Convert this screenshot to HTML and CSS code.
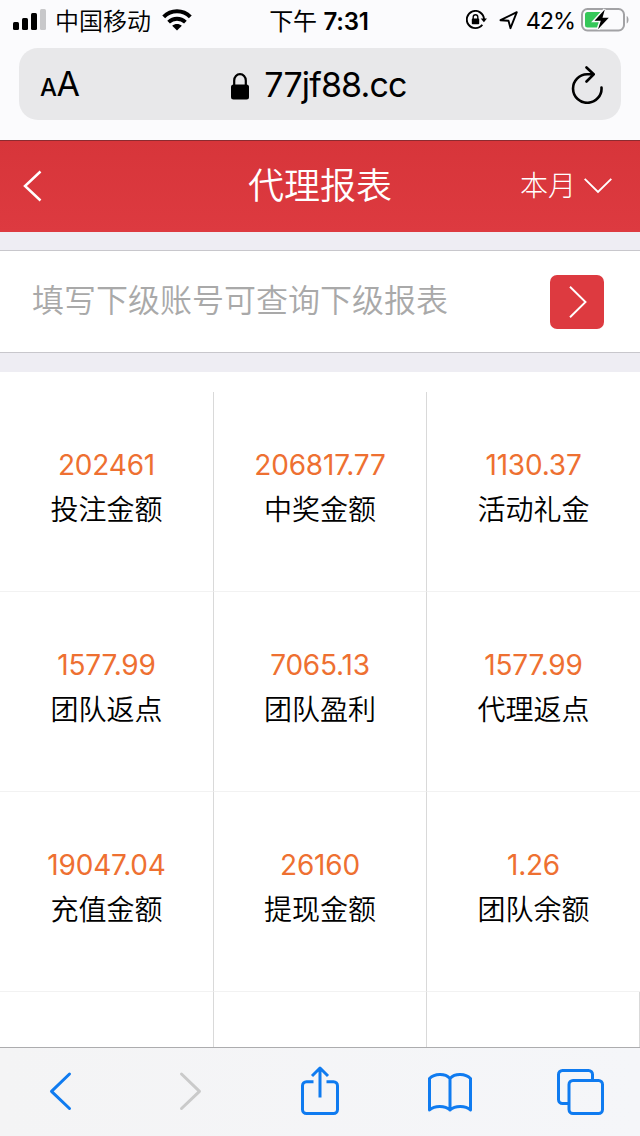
FILE: index.html
```html
<!DOCTYPE html>
<html lang="zh-CN">
<head>
    <meta charset="UTF-8">
    <meta name="viewport" content="width=device-width, initial-scale=1.0">
    <title>代理报表</title>
    <link rel="stylesheet" href="styles.css">
</head>
<body>
    <div class="browser-top">
        <div class="status-bar">
            <div class="status-left">
                <svg class="signal" width="33" height="22" viewBox="0 0 33 22">
                    <rect x="0" y="13" width="6" height="8" rx="1.5"/>
                    <rect x="9" y="9" width="6" height="12" rx="1.5"/>
                    <rect x="18" y="4" width="6" height="17" rx="1.5"/>
                    <rect x="27" y="0" width="6" height="21" rx="1.5" fill="#c8c8ca"/>
                </svg>
                <span class="carrier">中国移动</span>
                <svg class="wifi" width="30" height="22" viewBox="0 0 30 22">
                    <path d="M1.7 7.8C9 .3 21 .3 28.3 7.8" fill="none" stroke="#000" stroke-width="4"/>
                    <path d="M6.6 13.2c4.7-4.6 12.1-4.6 16.8 0" fill="none" stroke="#000" stroke-width="3.8"/>
                    <path d="M10.2 16.7c2.7-2.4 6.9-2.4 9.6 0L15 21.5z"/>
                </svg>
            </div>
            <div class="status-time"><span>下午</span> <b>7:31</b></div>
            <div class="status-right">
                <svg width="21" height="20" viewBox="0 0 21 20">
                    <path d="M16.3 14.7A8.6 8.6 0 1 1 18 9" fill="none" stroke="#000" stroke-width="1.9"/>
                    <path d="M14.7 8.4H21L17.9 12.3z"/>
                    <rect x="5.8" y="8.6" width="7.4" height="5.6" rx=".8"/>
                    <path d="M7.2 9V7a2.3 2.3 0 0 1 4.6 0v2" fill="none" stroke="#000" stroke-width="1.4"/>
                </svg>
                <svg class="location" width="20" height="20" viewBox="0 0 20 20">
                    <path d="M1.5 10.2 17.8 2.2 11.5 18.2 9.5 10.7z" fill="none" stroke="#000" stroke-width="1.9" stroke-linejoin="round"/>
                </svg>
                <span class="percent">42%</span>
                <svg class="battery" width="48" height="24" viewBox="0 0 48 24">
                    <rect x="1" y="1" width="42" height="21.5" rx="5.5" fill="none" stroke="#a2a2a5" stroke-width="2"/>
                    <path d="M45.7 8c2.4 1 2.4 6.5 0 7.5z" fill="#a2a2a5"/>
                    <path d="M6.5 4H21v15.5H6.5A2.500 2.500 0 0 1 4 17V6.500A2.500 2.500 0 0 1 6.500 4z" fill="#35c759"/>
                    <path d="M23.8 1.500 13.500 12.800h6.300L17 21.300 27.800 9.800h-6.300z" stroke="#fbfbfd" stroke-width="3" paint-order="stroke"/>
                </svg>
            </div>
        </div>
        <div class="address-bar">
            <div class="text-size"><span class="small-a">A</span>A</div>
            <div class="url">
                <svg width="18" height="27" viewBox="0 0 18 27">
                    <rect x="0" y="11.5" width="18" height="15" rx="2.5"/>
                    <path d="M3.2 13V7.5a5.8 6.3 0 0 1 11.6 0V13" fill="none" stroke="#000" stroke-width="2.2"/>
                </svg>
                <span>77jf88.cc</span>
            </div>
            <svg class="reload" width="32" height="38" viewBox="0 0 32 38">
                <path d="M30.5 21.5A14.25 14.25 0 1 1 16.2 8.3H22M15.5 1.5 22.7 8.3 15.5 15.5" fill="none" stroke="#000" stroke-width="2.6" stroke-linecap="round" stroke-linejoin="round"/>
            </svg>
        </div>
    </div>

    <div class="header">
        <svg class="back" width="19" height="32" viewBox="0 0 19 32">
            <path d="M17.5 1.5 2 16 17.5 30.5" fill="none" stroke="#fff" stroke-width="2.5"/>
        </svg>
        <h1>代理报表</h1>
        <div class="period">
            <span>本月</span>
            <svg width="28" height="16" viewBox="0 0 28 16">
                <path d="M.7.8 14 14 27.3.8" fill="none" stroke="#fff" stroke-width="1.9"/>
            </svg>
        </div>
    </div>

    <div class="search">
        <input class="search-input" type="text" placeholder="填写下级账号可查询下级报表">
        <button class="search-button">
            <svg width="18" height="32" viewBox="0 0 18 32">
                <path d="M1 .8 16.5 16 1 31.2" fill="none" stroke="#fff" stroke-width="1.9"/>
            </svg>
        </button>
    </div>

    <div class="report">
        <div class="grid">
            <div class="item"><p class="num">202461</p><p class="label">投注金额</p></div>
            <div class="item"><p class="num">206817.77</p><p class="label">中奖金额</p></div>
            <div class="item"><p class="num">1130.37</p><p class="label">活动礼金</p></div>
            <div class="item"><p class="num">1577.99</p><p class="label">团队返点</p></div>
            <div class="item"><p class="num">7065.13</p><p class="label">团队盈利</p></div>
            <div class="item"><p class="num">1577.99</p><p class="label">代理返点</p></div>
            <div class="item"><p class="num">19047.04</p><p class="label">充值金额</p></div>
            <div class="item"><p class="num">26160</p><p class="label">提现金额</p></div>
            <div class="item"><p class="num">1.26</p><p class="label">团队余额</p></div>
            <div class="item"></div>
            <div class="item"></div>
            <div class="item last"></div>
        </div>
    </div>

    <div class="toolbar">
        <svg width="50" height="50" viewBox="0 0 50 50">
            <path d="M34.5 8 16.5 25.3 34.5 42.5"/>
        </svg>
        <svg class="disabled" width="50" height="50" viewBox="0 0 50 50">
            <path d="M16.5 8 34.5 25.3 16.5 42.5"/>
        </svg>
        <svg width="50" height="50" viewBox="0 0 50 50">
            <path d="M18.500 15.700H11.500a4 4 0 0 0-4 4V43.500a4 4 0 0 0 4 4h27a4 4 0 0 0 4-4V19.700a4 4 0 0 0-4-4H31.500M25 31.500V2M17 10 25 2l8 8" stroke-linecap="butt"/>
        </svg>
        <svg width="50" height="50" viewBox="0 0 50 50">
            <path d="M25 12.500C20 7 9.500 7.500 4.500 12.500V44C9.500 39.300 20 39.300 25 44c5-4.700 15.500-4.700 20.500 0V12.500C40.500 7.500 30 7 25 12.500zV44"/>
        </svg>
        <svg width="50" height="50" viewBox="0 0 50 50">
            <path d="M13 37.500H7.500a4 4 0 0 1-4-4v-25a4 4 0 0 1 4-4h26a4 4 0 0 1 4 4V14"/>
            <rect x="14" y="14.500" width="33.500" height="33" rx="4"/>
        </svg>
    </div>
</body>
</html>
```
FILE: styles.css
```css
* {
    box-sizing: border-box;
}

body {
    margin: 0;
    width: 640px;
    height: 1136px;
    overflow: hidden;
    display: flex;
    flex-direction: column;
    font-family: Inter, "Noto Sans CJK SC", sans-serif;
    font-weight: 400;
    background: #eeedf3;
    color: #000;
}

svg {
    display: block;
    flex: none;
}

.browser-top {
    height: 141px;
    background: #fbfbfd;
    border-bottom: 1px solid #8c2b30;
}

.status-bar {
    height: 48px;
    padding: 0 11px 8px 13px;
    display: grid;
    grid-template-columns: 1fr 120px 1fr;
    align-items: center;
    font-size: 24px;
    line-height: 36px;
}

.status-left,
.status-right {
    display: flex;
    align-items: center;
}

.status-right {
    justify-content: flex-end;
}

.carrier {
    margin: 0 11px 0 9px;
    padding-top: 3px;
    font-weight: 350;
}

.status-time {
    padding: 3px 4px 0 0;
    text-align: center;
    white-space: nowrap;
    font-weight: 400;
    letter-spacing: -0.2px;
}

.status-time b {
    font-weight: 600;
}

.location {
    margin: 0 7px 0 12px;
}

.percent {
    padding-top: 2px;
    margin-right: 6px;
    font-size: 23.5px;
    letter-spacing: -1.1px;
}

.address-bar {
    height: 72px;
    margin: 0 19px;
    padding: 0 18px 0 21px;
    display: grid;
    grid-template-columns: 60px 1fr 60px;
    align-items: center;
    background: #e8e8ea;
    border-radius: 19px;
}

.text-size {
    font-size: 34px;
    line-height: 72px;
    letter-spacing: -0.5px;
}

.small-a {
    font-size: 24px;
    font-weight: 500;
}

.url {
    display: flex;
    justify-content: center;
    align-items: center;
    padding-right: 5px;
    font-size: 34px;
}

.url svg {
    margin-right: 15px;
}

.url span {
    padding-bottom: 4px;
    letter-spacing: -0.85px;
}

.reload {
    justify-self: end;
    margin-bottom: 2px;
}

.header {
    height: 91px;
    padding: 0 28px 1px 23px;
    display: grid;
    grid-template-columns: 150px 1fr 145px;
    align-items: center;
    color: #fff;
    background: linear-gradient(#d7353a, #dd3a40);
}

.header h1 {
    margin: 0;
    padding-bottom: 1px;
    font-size: 36px;
    font-weight: 350;
    line-height: 50px;
    text-align: center;
}

.period {
    display: flex;
    justify-content: flex-end;
    align-items: center;
    font-size: 28px;
    font-weight: 300;
}

.period span {
    padding-bottom: 5px;
}

.period svg {
    margin-left: 8px;
}

.search {
    height: 103px;
    margin: 18px 0 19px;
    padding: 0 36px 0 32px;
    display: flex;
    align-items: center;
    justify-content: space-between;
    background: #fff;
    border-top: 1px solid #c8c7cc;
    border-bottom: 1px solid #c8c7cc;
}

.search-input {
    width: 480px;
    height: 60px;
    padding: 0 0 3px;
    border: none;
    outline: none;
    font-family: inherit;
    font-size: 32px;
    font-weight: 350;
}

.search-input::placeholder {
    color: #a9a9a9;
}

.search-button {
    width: 54px;
    height: 54px;
    padding: 0 0 0 2px;
    display: flex;
    align-items: center;
    justify-content: center;
    background: #dd3a40;
    border: none;
    border-radius: 7px;
}

.report {
    height: 675px;
    padding-top: 20px;
    overflow: hidden;
    background: #fff;
}

.grid {
    display: grid;
    grid-template-columns: 214px 213px 213px;
    grid-auto-rows: 200px;
}

.item {
    padding-top: 50px;
    text-align: center;
    border-right: 1px solid #d9d9d9;
    border-bottom: 1px solid #f2f2f2;
}

.item:nth-child(3n):not(.last) {
    border-right: none;
}

.item p {
    margin: 0;
    height: 45px;
    line-height: 46px;
}

.item .num {
    font-size: 28px;
    letter-spacing: -0.2px;
    color: #ee7031;
}

.item .label {
    font-size: 28px;
    font-weight: 350;
}

.toolbar {
    height: 89px;
    padding: 0 35px 2px;
    display: flex;
    justify-content: space-between;
    align-items: center;
    background: linear-gradient(to right, #f4f4f5, #f5f6f9);
    border-top: 1px solid #acacae;
}

.toolbar svg {
    fill: none;
    stroke: #0f7bf0;
    stroke-width: 3;
    stroke-linecap: round;
    stroke-linejoin: round;
}

.toolbar .disabled {
    stroke: #cacaca;
}
```
